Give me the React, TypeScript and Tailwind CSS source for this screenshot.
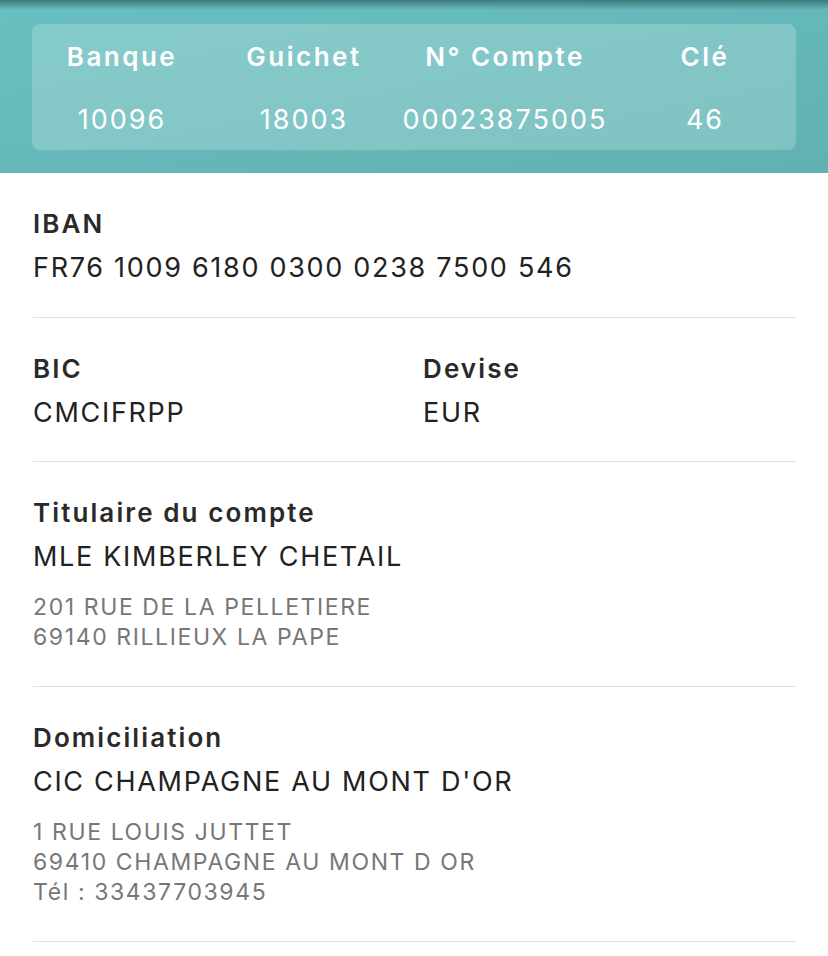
import React from "react";

const font = { fontFamily: "Inter, 'Noto Sans', 'Liberation Sans', sans-serif" };

function Label({ children }: { children: React.ReactNode }) {
  return <div className="text-[26px] leading-[36px] font-semibold tracking-[2.1px] text-[#2a2a2a]">{children}</div>;
}
function Value({ children }: { children: React.ReactNode }) {
  return <div className="text-[27px] leading-[52px] tracking-[1.7px] text-[#222222]">{children}</div>;
}
function Address({ lines }: { lines: string[] }) {
  return (
    <div className="mt-[9px] mb-[11px] text-[23px] leading-[30px] tracking-[1.6px] text-[#777777]">
      {lines.map((l) => (
        <div key={l}>{l}</div>
      ))}
    </div>
  );
}

export default function App() {
  const cols = [
    ["Banque", "10096"],
    ["Guichet", "18003"],
    ["N° Compte", "00023875005"],
    ["Clé", "46"],
  ];
  return (
    <div className="w-[828px] h-[956px] bg-white overflow-hidden" style={font}>
      <div className="relative bg-gradient-to-br from-[#69c0c0] to-[#61b1b2] px-[32px] pt-[24px] pb-[23px]">
        <div className="absolute left-0 right-0 top-0 h-[10px] bg-gradient-to-b from-[#3d7a7b] to-transparent" />
        <div className="relative rounded-[8px] bg-white/20 pt-[15px] pb-[10px] grid grid-cols-[180px_184px_218px_182px] text-white text-center">
          {cols.map(([k]) => (
            <div key={k} className="text-[26px] leading-[36px] font-semibold tracking-[2.5px]">{k}</div>
          ))}
          {cols.map(([k, v]) => (
            <div key={k + "v"} className="mt-[25px] text-[27px] leading-[40px] tracking-[2px]">{v}</div>
          ))}
        </div>
      </div>
      <div className="pl-[33px] pr-[32px]">
        <div className="pt-[33px] pb-[23px] border-b border-[#e0e0e0]">
          <Label>IBAN</Label>
          <Value>FR76 1009 6180 0300 0238 7500 546</Value>
        </div>
        <div className="pt-[33px] pb-[22px] border-b border-[#e0e0e0] grid grid-cols-[390px_1fr]">
          <div>
            <Label>BIC</Label>
            <Value>CMCIFRPP</Value>
          </div>
          <div>
            <Label>Devise</Label>
            <Value>EUR</Value>
          </div>
        </div>
        <div className="pt-[33px] pb-[23px] border-b border-[#e0e0e0]">
          <Label>Titulaire du compte</Label>
          <Value>MLE KIMBERLEY CHETAIL</Value>
          <Address lines={["201 RUE DE LA PELLETIERE", "69140 RILLIEUX LA PAPE"]} />
        </div>
        <div className="pt-[33px] pb-[23px] border-b border-[#e0e0e0]">
          <Label>Domiciliation</Label>
          <Value>CIC CHAMPAGNE AU MONT D'OR</Value>
          <Address lines={["1 RUE LOUIS JUTTET", "69410 CHAMPAGNE AU MONT D OR", "Tél : 33437703945"]} />
        </div>
      </div>
    </div>
  );
}
